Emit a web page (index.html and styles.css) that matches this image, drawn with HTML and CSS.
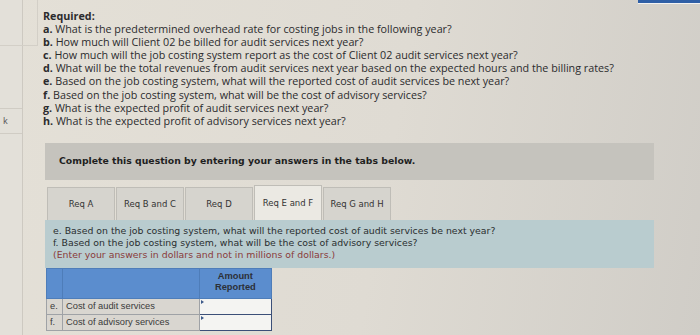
FILE: index.html
```html
<!DOCTYPE html>
<html lang="en">
<head>
    <meta charset="UTF-8">
    <title>Required</title>
    <link rel="stylesheet" href="styles.css">
</head>
<body>
    <div class="side">
        <div class="side-top"></div>
        <div class="side-k">k</div>
    </div>
    <div class="topbar"></div>

    <div class="main">
        <div class="required">
            <p class="req-title">Required:</p>
            <p><b>a.</b> What is the predetermined overhead rate for costing jobs in the following year?</p>
            <p><b>b.</b> How much will Client 02 be billed for audit services next year?</p>
            <p><b>c.</b> How much will the job costing system report as the cost of Client 02 audit services next year?</p>
            <p><b>d.</b> What will be the total revenues from audit services next year based on the expected hours and the billing rates?</p>
            <p><b>e.</b> Based on the job costing system, what will the reported cost of audit services be next year?</p>
            <p><b>f.</b> Based on the job costing system, what will be the cost of advisory services?</p>
            <p><b>g.</b> What is the expected profit of audit services next year?</p>
            <p><b>h.</b> What is the expected profit of advisory services next year?</p>
        </div>

        <div class="banner">Complete this question by entering your answers in the tabs below.</div>

        <div class="tabs">
            <div class="tab">Req A</div>
            <div class="tab">Req B and C</div>
            <div class="tab">Req D</div>
            <div class="tab active">Req E and F</div>
            <div class="tab">Req G and H</div>
        </div>

        <div class="question">
            <p>e. Based on the job costing system, what will the reported cost of audit services be next year?</p>
            <p>f. Based on the job costing system, what will be the cost of advisory services?</p>
            <p class="note">(Enter your answers in dollars and not in millions of dollars.)</p>
        </div>

        <table class="answers">
            <tr class="head">
                <th class="letter"></th>
                <th class="label"></th>
                <th class="amount">Amount<br>Reported</th>
            </tr>
            <tr>
                <td class="letter">e.</td>
                <td class="label">Cost of audit services</td>
                <td class="input"><span class="flag"></span></td>
            </tr>
            <tr>
                <td class="letter">f.</td>
                <td class="label">Cost of advisory services</td>
                <td class="input"><span class="flag"></span></td>
            </tr>
        </table>
    </div>
</body>
</html>
```

FILE: styles.css
```css
body {
    margin: 0;
    width: 700px;
    height: 335px;
    overflow: hidden;
    display: flex;
    position: relative;
    background: linear-gradient(100deg, #e4e0d7 0%, #dfdbd3 55%, #d0cdc7 100%);
    font-family: 'Open Sans', 'Lato', sans-serif;
    color: #2b2b2d;
}

.side {
    width: 22px;
    flex-shrink: 0;
    border-right: 1px solid #cdc9c1;
    background: #e3e0d9;
}

.side-top {
    height: 46px;
    width: 38px;
    border-right: 1px solid #d3cfc7;
    border-bottom: 1px solid #d3cfc7;
    box-sizing: border-box;
}

.side-k {
    margin-top: 62px;
    height: 24px;
    border-top: 1px solid #d0ccc4;
    border-bottom: 1px solid #d0ccc4;
    font-size: 9px;
    line-height: 24px;
    padding-left: 3px;
    color: #555;
}

.topbar {
    position: absolute;
    top: 0;
    right: 0;
    width: 62px;
    height: 3px;
    background: #2f5fa6;
    border-bottom: 1px solid #f2f2f2;
}

.main {
    padding: 10px 0 0 20px;
    width: 611px;
}

.required p {
    margin: 0;
    font-size: 10.75px;
    line-height: 13.1px;
    white-space: nowrap;
}

.required .req-title {
    font-weight: bold;
}

.banner {
    margin: 15px 0 0 2px;
    height: 37px;
    background: #c5c3bd;
    font-family: 'DejaVu Sans', Verdana, sans-serif;
    font-weight: bold;
    font-size: 9.3px;
    line-height: 36px;
    padding-left: 14px;
    color: #1f1f1f;
}

.tabs {
    display: flex;
    margin: 6px 0 0 4px;
    height: 34px;
    align-items: flex-end;
}

.tab {
    width: 66px;
    height: 32px;
    margin-right: 1px;
    background: #d6d4ce;
    border: 1px solid #bfbdb7;
    border-bottom: none;
    font-family: 'DejaVu Sans', Verdana, sans-serif;
    font-size: 8.5px;
    line-height: 32px;
    text-align: center;
    color: #333;
    white-space: nowrap;
}

.tab.active {
    height: 34px;
    line-height: 34px;
    background: #ebe9e3;
}

.question {
    margin-left: 2px;
    height: 43px;
    background: #b9cccf;
    padding: 5px 0 0 8px;
    font-family: 'DejaVu Sans', Verdana, sans-serif;
    font-size: 9.35px;
    line-height: 12px;
    color: #2a2e30;
}

.question p {
    margin: 0;
}

.question .note {
    color: #8a3a3a;
}

.answers {
    margin: 0 0 0 3px;
    border-collapse: collapse;
    table-layout: fixed;
    width: 226px;
    font-family: 'Liberation Sans', Arial, sans-serif;
    font-size: 9.3px;
    color: #3a3a3a;
}

.answers th,
.answers td {
    border: 1px solid #9fa2a6;
    padding: 0;
}

.answers .head th {
    height: 27px;
    background: #5b8dce;
    border-color: #4e7db9;
}

.answers .letter {
    width: 12px;
    padding-left: 3px;
}

.answers .label {
    width: 132px;
    padding-left: 3px;
}

.answers .amount {
    width: 71px;
    font-weight: bold;
    font-size: 9.3px;
    line-height: 11px;
    color: #2c3038;
    vertical-align: top;
    padding: 2px 0 0;
}

.answers td {
    height: 15px;
    background: #d9d6d0;
}

.answers td.input {
    background: #f4f4f2;
    border: 1px solid #3b4f78;
    position: relative;
}

.flag {
    position: absolute;
    top: 1px;
    left: 1px;
    border-left: 3px solid #3d5a8a;
    border-top: 2px solid transparent;
    border-bottom: 2px solid transparent;
}
```
